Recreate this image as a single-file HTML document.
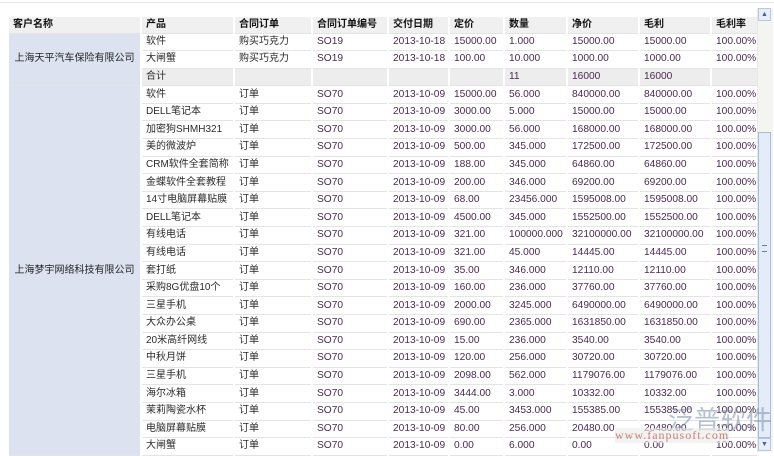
<!DOCTYPE html>
<html><head><meta charset="utf-8"><style>
body{margin:0;width:774px;height:452px;overflow:hidden;background:#fff;position:relative;font-family:"Liberation Sans","Noto Sans CJK SC",sans-serif;font-size:10px;color:#222}
.topline{position:absolute;left:0;top:2px;width:774px;height:1px;background:#e4e4e4}
table{position:absolute;left:7px;top:17px;width:750px;border-collapse:collapse;table-layout:fixed}
tr{height:17.6px}
td{border:2px solid #fff;border-top:1px solid #e4e4e4;border-bottom:1px solid #e4e4e4;padding:0 0 0 4px;line-height:12px;white-space:nowrap;overflow:hidden;color:#2a2a2a}
td.n{color:#4a2a50;font-size:10.2px}
tr.h{height:16px}
tr.h td{background:#f0f0f0;font-weight:bold;border-top:none;color:#111}
tr.s td{background:#ededed}
td.c{background:#dce2f0;text-align:center;padding:0;color:#222}
.sb{position:absolute;left:757px;top:8px;width:15px;height:444px;background:#f4f4f0;border-left:1px solid #e8e8e8}
.up,.dn{position:absolute;left:758px;width:13px;height:13px;background:#e8eef8;border:1px solid #b8c8e0;box-sizing:border-box;font-size:7px;color:#4060a0;text-align:center;line-height:12px}
.th{position:absolute;left:758px;top:132px;width:13px;height:306px;background:#e4ecf8;border:1px solid #a8bcd8;box-sizing:border-box}
.wm1{position:absolute;left:668px;top:400px;font-size:26px;color:rgba(120,140,170,.55);font-family:"Noto Sans CJK SC",sans-serif}
.wm2{position:absolute;left:615px;top:428px;font-size:12px;color:rgba(190,90,70,.75);font-family:"Liberation Serif",serif;letter-spacing:1px;background:rgba(235,235,235,.6)}
</style></head><body>
<div class="topline"></div>
<table>
<colgroup><col style="width:133px"><col style="width:93px"><col style="width:78px"><col style="width:76px"><col style="width:61px"><col style="width:55px"><col style="width:63px"><col style="width:72px"><col style="width:72px"><col style="width:47px"></colgroup>
<tr class="h"><td>客户名称</td><td>产品</td><td>合同订单</td><td>合同订单编号</td><td>交付日期</td><td>定价</td><td>数量</td><td>净价</td><td>毛利</td><td>毛利率</td></tr>
<tr><td class="c" rowspan="3">上海天平汽车保险有限公司</td><td>软件</td><td>购买巧克力</td><td class="n">SO19</td><td class="n">2013-10-18</td><td class="n">15000.00</td><td class="n">1.000</td><td class="n">15000.00</td><td class="n">15000.00</td><td class="n">100.00%</td></tr>
<tr><td>大闸蟹</td><td>购买巧克力</td><td class="n">SO19</td><td class="n">2013-10-18</td><td class="n">100.00</td><td class="n">10.000</td><td class="n">1000.00</td><td class="n">1000.00</td><td class="n">100.00%</td></tr>
<tr class="s"><td>合计</td><td></td><td></td><td></td><td></td><td class="n">11</td><td class="n">16000</td><td class="n">16000</td><td></td></tr>
<tr><td class="c" rowspan="21">上海梦宇网络科技有限公司</td><td>软件</td><td>订单</td><td class="n">SO70</td><td class="n">2013-10-09</td><td class="n">15000.00</td><td class="n">56.000</td><td class="n">840000.00</td><td class="n">840000.00</td><td class="n">100.00%</td></tr>
<tr><td>DELL笔记本</td><td>订单</td><td class="n">SO70</td><td class="n">2013-10-09</td><td class="n">3000.00</td><td class="n">5.000</td><td class="n">15000.00</td><td class="n">15000.00</td><td class="n">100.00%</td></tr>
<tr><td>加密狗SHMH321</td><td>订单</td><td class="n">SO70</td><td class="n">2013-10-09</td><td class="n">3000.00</td><td class="n">56.000</td><td class="n">168000.00</td><td class="n">168000.00</td><td class="n">100.00%</td></tr>
<tr><td>美的微波炉</td><td>订单</td><td class="n">SO70</td><td class="n">2013-10-09</td><td class="n">500.00</td><td class="n">345.000</td><td class="n">172500.00</td><td class="n">172500.00</td><td class="n">100.00%</td></tr>
<tr><td>CRM软件全套简称</td><td>订单</td><td class="n">SO70</td><td class="n">2013-10-09</td><td class="n">188.00</td><td class="n">345.000</td><td class="n">64860.00</td><td class="n">64860.00</td><td class="n">100.00%</td></tr>
<tr><td>金蝶软件全套教程</td><td>订单</td><td class="n">SO70</td><td class="n">2013-10-09</td><td class="n">200.00</td><td class="n">346.000</td><td class="n">69200.00</td><td class="n">69200.00</td><td class="n">100.00%</td></tr>
<tr><td>14寸电脑屏幕贴膜</td><td>订单</td><td class="n">SO70</td><td class="n">2013-10-09</td><td class="n">68.00</td><td class="n">23456.000</td><td class="n">1595008.00</td><td class="n">1595008.00</td><td class="n">100.00%</td></tr>
<tr><td>DELL笔记本</td><td>订单</td><td class="n">SO70</td><td class="n">2013-10-09</td><td class="n">4500.00</td><td class="n">345.000</td><td class="n">1552500.00</td><td class="n">1552500.00</td><td class="n">100.00%</td></tr>
<tr><td>有线电话</td><td>订单</td><td class="n">SO70</td><td class="n">2013-10-09</td><td class="n">321.00</td><td class="n">100000.000</td><td class="n">32100000.00</td><td class="n">32100000.00</td><td class="n">100.00%</td></tr>
<tr><td>有线电话</td><td>订单</td><td class="n">SO70</td><td class="n">2013-10-09</td><td class="n">321.00</td><td class="n">45.000</td><td class="n">14445.00</td><td class="n">14445.00</td><td class="n">100.00%</td></tr>
<tr><td>套打纸</td><td>订单</td><td class="n">SO70</td><td class="n">2013-10-09</td><td class="n">35.00</td><td class="n">346.000</td><td class="n">12110.00</td><td class="n">12110.00</td><td class="n">100.00%</td></tr>
<tr><td>采购8G优盘10个</td><td>订单</td><td class="n">SO70</td><td class="n">2013-10-09</td><td class="n">160.00</td><td class="n">236.000</td><td class="n">37760.00</td><td class="n">37760.00</td><td class="n">100.00%</td></tr>
<tr><td>三星手机</td><td>订单</td><td class="n">SO70</td><td class="n">2013-10-09</td><td class="n">2000.00</td><td class="n">3245.000</td><td class="n">6490000.00</td><td class="n">6490000.00</td><td class="n">100.00%</td></tr>
<tr><td>大众办公桌</td><td>订单</td><td class="n">SO70</td><td class="n">2013-10-09</td><td class="n">690.00</td><td class="n">2365.000</td><td class="n">1631850.00</td><td class="n">1631850.00</td><td class="n">100.00%</td></tr>
<tr><td>20米高纤网线</td><td>订单</td><td class="n">SO70</td><td class="n">2013-10-09</td><td class="n">15.00</td><td class="n">236.000</td><td class="n">3540.00</td><td class="n">3540.00</td><td class="n">100.00%</td></tr>
<tr><td>中秋月饼</td><td>订单</td><td class="n">SO70</td><td class="n">2013-10-09</td><td class="n">120.00</td><td class="n">256.000</td><td class="n">30720.00</td><td class="n">30720.00</td><td class="n">100.00%</td></tr>
<tr><td>三星手机</td><td>订单</td><td class="n">SO70</td><td class="n">2013-10-09</td><td class="n">2098.00</td><td class="n">562.000</td><td class="n">1179076.00</td><td class="n">1179076.00</td><td class="n">100.00%</td></tr>
<tr><td>海尔冰箱</td><td>订单</td><td class="n">SO70</td><td class="n">2013-10-09</td><td class="n">3444.00</td><td class="n">3.000</td><td class="n">10332.00</td><td class="n">10332.00</td><td class="n">100.00%</td></tr>
<tr><td>茉莉陶瓷水杯</td><td>订单</td><td class="n">SO70</td><td class="n">2013-10-09</td><td class="n">45.00</td><td class="n">3453.000</td><td class="n">155385.00</td><td class="n">155385.00</td><td class="n">100.00%</td></tr>
<tr><td>电脑屏幕贴膜</td><td>订单</td><td class="n">SO70</td><td class="n">2013-10-09</td><td class="n">80.00</td><td class="n">256.000</td><td class="n">20480.00</td><td class="n">20480.00</td><td class="n">100.00%</td></tr>
<tr><td>大闸蟹</td><td>订单</td><td class="n">SO70</td><td class="n">2013-10-09</td><td class="n">0.00</td><td class="n">6.000</td><td class="n">0.00</td><td class="n">0.00</td><td class="n">100.00%</td></tr>
</table>
<div class="sb"></div>
<div class="up" style="top:8px">▲</div>
<div class="th"><div style="position:absolute;left:3px;top:112px;width:5px;height:5px;border-top:1px solid #6080b0;border-bottom:1px solid #6080b0"></div></div>
<div class="dn" style="top:438px">▼</div>
<div class="wm1">泛普软件</div>
<div class="wm2">www.fanpusoft.com</div>
</body></html>
